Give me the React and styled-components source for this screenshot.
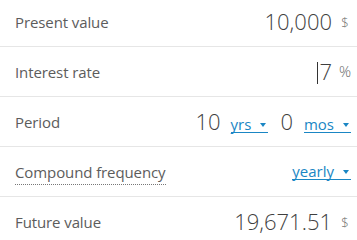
import React from 'react';
import styled, { createGlobalStyle } from 'styled-components';

const Global = createGlobalStyle`
  body {
    margin: 0;
    background: #fff;
    font-family: "Open Sans", "Noto Sans", sans-serif;
  }
`;

const Panel = styled.div`
  width: 357px;
  margin-top: -3px;
`;

const Row = styled.div`
  display: flex;
  align-items: center;
  justify-content: space-between;
  height: 49px;
  padding: 0 5px 0 15px;
  border-bottom: ${p => (p.last ? 'none' : '1px solid #e6e6e6')};
`;

const Label = styled.span`
  font-size: 15px;
  color: #5c5c5c;
  line-height: 1.2;
  letter-spacing: -0.1px;
  padding-bottom: ${p => (p.dotted ? '3px' : '0')};
  border-bottom: ${p => (p.dotted ? '1px dotted #777' : 'none')};
  margin-top: ${p => (p.dotted ? '4px' : '0')};
`;

const Right = styled.div`
  display: flex;
  align-items: baseline;
`;

const Value = styled.span`
  font-size: 22px;
  font-weight: 300;
  color: #3f3f3f;
  line-height: 1;
`;

const Caret = styled.span`
  display: inline-block;
  width: 1px;
  height: 22px;
  background: #333;
  margin-right: 1px;
  vertical-align: -4px;
`;

const Unit = styled.span`
  width: 14px;
  margin-left: 6px;
  text-align: center;
  font-size: ${p => (p.wide ? 15 : 13)}px;
  font-weight: 300;
  color: #6a6a6a;
  position: relative;
  top: -3px;
`;

const Link = styled.span`
  display: inline-block;
  font-size: 15px;
  color: #1a86c4;
  line-height: 1.1;
  border-bottom: 1px solid #1a86c4;
  margin-left: ${p => p.gap || 0}px;
  margin-right: 1px;
`;

const Arrow = styled.span`
  display: inline-block;
  width: 0;
  height: 0;
  margin-left: 9px;
  margin-right: 2px;
  border-left: 3px solid transparent;
  border-right: 3px solid transparent;
  border-top: 4px solid #1a86c4;
  vertical-align: 3px;
`;

const Num = styled(Value)`
  margin-left: ${p => p.gap || 0}px;
`;

const Dropdown = ({ children, gap }) => (
  <Link gap={gap}>
    {children}
    <Arrow />
  </Link>
);

const App = () => {
  return (
    <>
      <Global />
      <Panel>
        <Row>
          <Label>Present value</Label>
          <Right>
            <Value>10,000</Value>
            <Unit>$</Unit>
          </Right>
        </Row>
        <Row>
          <Label>Interest rate</Label>
          <Right>
            <Value>
              <Caret />7
            </Value>
            <Unit wide>%</Unit>
          </Right>
        </Row>
        <Row>
          <Label>Period</Label>
          <Right>
            <Num>10</Num>
            <Dropdown gap={10}>yrs</Dropdown>
            <Num gap={11}>0</Num>
            <Dropdown gap={11}>mos</Dropdown>
          </Right>
        </Row>
        <Row>
          <Label dotted>Compound frequency</Label>
          <Right>
            <Dropdown>yearly</Dropdown>
          </Right>
        </Row>
        <Row last>
          <Label>Future value</Label>
          <Right>
            <Value>19,671.51</Value>
            <Unit>$</Unit>
          </Right>
        </Row>
      </Panel>
    </>
  );
};

export default App;
